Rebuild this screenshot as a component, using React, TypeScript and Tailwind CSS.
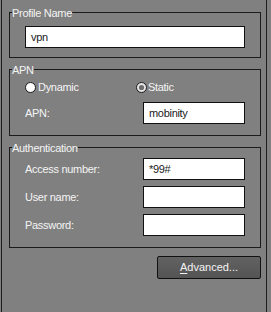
function Radio({ checked }: { checked?: boolean }) {
	return (
		<svg width="11" height="11" viewBox="0 0 11 11" className="shrink-0">
			<circle cx="5.5" cy="5.5" r="5" fill={checked ? "#e6e6e6" : "#ffffff"} stroke="#1a1a1a" strokeWidth="1" />
			{checked && <circle cx="5.5" cy="5.5" r="2.6" fill="#6e6e6e" />}
		</svg>
	);
}

function Field({ value, className }: { value?: string; className: string }) {
	return (
		<div className={`h-[22px] bg-white border border-[#111] pl-[5px] flex items-center text-[#1a1a1a] ${className}`}>
			{value}
		</div>
	);
}

function Group({ title, className, children }: { title: string; className?: string; children: React.ReactNode }) {
	return (
		<fieldset className={`w-[252px] border border-[#1c1c1c] p-0 ${className ?? ""}`}>
			<legend className="ml-[2px] px-0 leading-[13px]">
				<span className="relative top-[1px]">{title}</span>
			</legend>
			{children}
		</fieldset>
	);
}

export default function App() {
	return (
		<div className="w-[271px] h-[312px] bg-[#808080] text-[11px] tracking-[-0.3px] text-[#f4f4f4] font-['Liberation_Sans',Arial,sans-serif]">
			<div className="ml-[1px] w-[266px] h-full border-x border-[#1e1e1e] pl-[7px] pt-[6px]">
				<Group title="Profile Name">
					<div className="pt-[7px] pl-[15px] pb-[9px]">
						<Field value="vpn" className="w-[220px]" />
					</div>
				</Group>

				<Group title="APN" className="mt-[5px]">
					<div className="pt-[5px] pl-[15px] pb-[11px]">
						<div className="flex h-[13px] items-center">
							<div className="w-[111px] flex items-center gap-[2px]">
								<Radio />
								<span>Dynamic</span>
							</div>
							<div className="flex items-center gap-[1px]">
								<Radio checked />
								<span>Static</span>
							</div>
						</div>
						<div className="mt-[8px] flex items-center">
							<span className="w-[118px]">APN:</span>
							<Field value="mobinity" className="w-[102px]" />
						</div>
					</div>
				</Group>

				<Group title="Authentication" className="mt-[5px]">
					<div className="pt-[4px] pl-[15px] pb-[11px] flex flex-col gap-[6px]">
						<div className="flex items-center">
							<span className="w-[118px]">Access number:</span>
							<Field value="*99#" className="w-[102px]" />
						</div>
						<div className="flex items-center">
							<span className="w-[118px]">User name:</span>
							<Field className="w-[102px]" />
						</div>
						<div className="flex items-center">
							<span className="w-[118px]">Password:</span>
							<Field className="w-[102px]" />
						</div>
					</div>
				</Group>

				<button className="mt-[8px] ml-[148px] w-[104px] h-[23px] border border-[#111] rounded-[2px] bg-gradient-to-b from-[#626262] to-[#545454] text-[#f4f4f4] tracking-[0px] block">
					<span className="underline underline-offset-2">A</span>dvanced...
				</button>
			</div>
		</div>
	);
}
